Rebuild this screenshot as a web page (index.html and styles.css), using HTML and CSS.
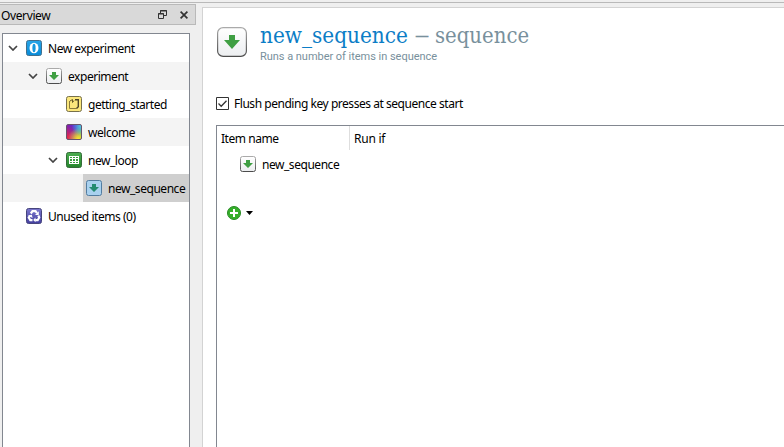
FILE: index.html
```
<!DOCTYPE html>
<html lang="en">
<head>
<meta charset="utf-8">
<title>Experiment editor</title>
<link rel="stylesheet" href="styles.css">
</head>
<body>
<svg class="defs" width="0" height="0">
  <defs>
    <linearGradient id="paper" x2="0" y2="1"><stop stop-color="#fff"/><stop offset="1" stop-color="#eceef0"/></linearGradient>
    <linearGradient id="edge" x2="0" y2="1"><stop stop-color="#aaa"/><stop offset="1" stop-color="#4c4c4c"/></linearGradient>
    <linearGradient id="blue" x2="0" y2="1"><stop stop-color="#27a5e8"/><stop offset="1" stop-color="#098bd8"/></linearGradient>
    <linearGradient id="leaf" x2="0" y2="1"><stop stop-color="#4cae50"/><stop offset="1" stop-color="#24862b"/></linearGradient>
    <linearGradient id="violet" x2="0" y2="1"><stop stop-color="#7c78cd"/><stop offset="1" stop-color="#433f9f"/></linearGradient>
    <symbol id="seq" viewBox="0 0 16 16">
      <rect x=".5" y=".5" width="15" height="15" rx="2" fill="url(#paper)" stroke="url(#edge)"/>
      <path d="M6 4h4v3h3l-5 5-5-5h3z" fill="#3f9f43"/>
    </symbol>
    <symbol id="chev" viewBox="0 0 10 6"><path d="M1 1l4 4 4-4" fill="none" stroke="#444" stroke-width="1.7"/></symbol>
  </defs>
</svg>
<div class="toolbar"></div>
<div class="workspace">
  <aside class="dock">
    <header class="dock-title"><span class="label dock-name">Overview</span>
      <svg class="float" width="9" height="9" viewBox="0 0 9 9" fill="none" stroke="#333"><path d="M2.5 3V.5h6v5H6M2 1h7"/><path d="M.5 3.500h5v5h-5zM0 4h6"/></svg>
      <svg class="close" width="8" height="8" viewBox="0 0 8 8"><path d="M.6.6l6.800 6.800M7.400.6L.6 7.400" stroke="#333" stroke-width="1.700"/></svg>
    </header>
    <div class="tree">
      <div class="row level0"><svg class="chevron"><use href="#chev"/></svg>
        <svg class="icon" viewBox="0 0 16 16"><rect x=".5" y=".5" width="15" height="15" rx="2" fill="url(#blue)" stroke="#426f8c"/><ellipse cx="8" cy="8" rx="4.500" ry="5.200" fill="#fff"/><ellipse cx="8" cy="8" rx="1.600" ry="4.200" fill="#1598df"/></svg>
        <span class="label">New experiment</span></div>
      <div class="row level1 alt"><svg class="chevron"><use href="#chev"/></svg>
        <svg class="icon"><use href="#seq"/></svg><span class="label">experiment</span></div>
      <div class="row level2"><span class="chevron"></span>
        <svg class="icon" viewBox="0 0 16 16"><rect x=".5" y=".5" width="15" height="15" rx="2" fill="#fbe77c" stroke="#77704b"/><path d="M3.500 5v7.500h7" fill="none" stroke="#8b7b3b"/><path d="M4 5l2.500-1.500v3L8 4.500" fill="none" stroke="#665a25"/><path d="M9 3.700h3.300v7l-1.800 1.800" fill="none" stroke="#4d4527" stroke-width="1.400"/></svg>
        <span class="label wide">getting_started</span></div>
      <div class="row level2 alt"><span class="chevron"></span><span class="icon rainbow"></span><span class="label">welcome</span></div>
      <div class="row level2"><svg class="chevron"><use href="#chev"/></svg>
        <svg class="icon" viewBox="0 0 16 16"><rect x=".5" y=".5" width="15" height="15" rx="2" fill="url(#leaf)" stroke="#336b38"/><path d="M3 4h10v8H3z" fill="#fff"/><path d="M4 5h2v1H4zm3 0h2v1H7zm3 0h2v1h-2zM4 7h2v2H4zm3 0h2v2H7zm3 0h2v2h-2zM4 10h2v1H4zm3 0h2v1H7zm3 0h2v1h-2z" fill="#399c3e"/></svg>
        <span class="label">new_loop</span></div>
      <div class="row level3 alt"><div class="selected">
        <svg class="icon" viewBox="0 0 16 16"><rect x=".5" y=".5" width="15" height="15" rx="2" fill="#a9d1ef" stroke="#527ca0"/><path d="M6 4h4v3h3l-5 5-5-5h3z" fill="#238b71"/></svg>
        <span class="label">new_sequence</span></div></div>
      <div class="row level0"><span class="chevron"></span>
        <svg class="icon" viewBox="0 0 16 16"><rect x=".5" y=".5" width="15" height="15" rx="2" fill="url(#violet)" stroke="#47457d"/><g fill="none" stroke="#fff" stroke-width="2.200"><path d="M4.800 5.500l1.700-2.300h3l1.500 2"/><path d="M12.300 7.500l.9 2-1.500 2.700H9.200"/><path d="M6.500 12.200H4.300L2.800 9.500 4 7.700"/></g><path d="M12.800 3.200v3.700H9zM9.500 9.500v4.700L7.200 12zM2 7.500l3.800-.8.8 3.300z" fill="#fff"/></svg>
        <span class="label">Unused items (0)</span></div>
    </div>
  </aside>
  <main class="editor">
    <header class="heading">
      <svg class="item-icon" width="30" height="30" viewBox="0 0 30 30"><rect x=".6" y=".6" width="28.800" height="28.800" rx="5.500" fill="url(#paper)" stroke="url(#edge)" stroke-width="1.200"/><path d="M12 8h6v5h5l-8 9-8-9h5z" fill="#3f9f43"/></svg>
      <div class="titles"><h1><span class="t-name">new_sequence</span><span class="t-dash">—</span><span class="t-type">sequence</span></h1><p>Runs a number of items in sequence</p></div>
    </header>
    <div class="option">
      <svg width="13" height="13" viewBox="0 0 13 13"><path d="M.5.5h12v12H.5z" fill="#fff" stroke="#333"/><path d="M2.500 6.500l2.700 2.700 5.300-5.500" fill="none" stroke="#333" stroke-width="1.300"/></svg>
      <span class="label">Flush pending key presses at sequence start</span>
    </div>
    <section class="table">
      <div class="columns"><div class="column first"><span class="label">Item name</span></div><div class="column"><span class="label wide">Run if</span></div></div>
      <div class="entry"><svg class="icon"><use href="#seq"/></svg><span class="label">new_sequence</span></div>
      <div class="add"><svg width="14" height="14" viewBox="0 0 14 14"><circle cx="7" cy="7" r="6.500" fill="#35af2a" stroke="#288a24"/><path d="M7 3v8M3 7h8" stroke="#fff" stroke-width="2"/></svg><svg width="7" height="4" viewBox="0 0 7 4"><path d="M0 0h7L3.500 4z"/></svg></div>
    </section>
  </main>
</div>
</body>
</html>
```
FILE: styles.css
```
* { box-sizing: border-box; }
body { margin: 0; width: 784px; height: 447px; overflow: hidden; background: #efefef; color: #000; font: 12px/16px "Noto Sans", sans-serif; }
svg { display: block; flex: none; }
.defs { position: absolute; }
.toolbar { height: 3px; border-bottom: 1px solid #b9b9b9; }
.workspace { display: flex; height: 444px; }
.dock { width: 202px; display: flex; flex-direction: column; padding-top: 1px; }
.dock-title { width: 196px; height: 21px; display: flex; align-items: center; padding-left: 1px; background: #d9d9d9; border: 1px solid #b9b9b9; border-left: 0; }
.dock-title .dock-name { width: 157px; padding-top: 2px; letter-spacing: -.38px; }
.float { margin-left: 0; }
.close { margin-left: 13px; }
.tree { width: 188px; flex: 1; margin: 8px 0 0 2px; background: #fff; border: 1px solid #828790; border-bottom: 0; }
.row { height: 28px; display: flex; align-items: center; }
.alt { background: #f4f4f4; }
.level0 { padding-left: 5px; }
.level1 { padding-left: 25px; }
.level2 { padding-left: 45px; }
.level3 { padding-left: 80px; }
.chevron { width: 10px; height: 6px; margin-right: 8px; flex: none; }
.icon { width: 16px; height: 16px; margin-right: 6px; flex: none; }
.selected { height: 28px; flex: 1; display: flex; align-items: center; padding-left: 3px; background: #cfcfcf; }
.rainbow { border: 1px solid #66536c; border-radius: 2px; background: radial-gradient(circle at 100% 10%, #4ac4e6, transparent 50%), radial-gradient(circle at 80% 100%, #ffe62d, transparent 60%), radial-gradient(circle at 0 90%, #ee2242, transparent 70%), linear-gradient(110deg, #7a1bb7, #5531d0 50%, #69d838); }
.label { display: block; white-space: nowrap; letter-spacing: -.46px; flex: none; }
.row .label, .entry .label, .option .label { padding-top: 2px; }
.wide { letter-spacing: -.25px; }
.row .wide { letter-spacing: -.5px; }
.editor { flex: 1; margin-top: 4px; padding: 0 0 0 13px; background: #fff; border: solid #d3d3d3; border-width: 1px 0 0 1px; display: flex; flex-direction: column; }
.heading { display: flex; height: 87px; padding: 19px 0 0 1px; }
.titles { margin-left: 13px; }
h1 { margin: -5px 0 0; height: 28px; display: flex; font: 22px/28px "Roboto Slab", "DejaVu Serif", serif; color: #0b7dc6; white-space: nowrap; }
h1 span { display: block; transform-origin: 0 50%; }
.t-name { width: 155px; transform: scaleX(.912); }
.t-dash { width: 20px; color: #78909c; transform: scaleX(.64); }
.t-type { color: #78909c; transform: scaleX(.895); }
p { margin: 0; font: 11px/14px Roboto, sans-serif; color: #78909c; white-space: nowrap; letter-spacing: -.03px; }
.option { height: 16px; display: flex; align-items: center; gap: 5px; }
.table { flex: 1; margin-top: 14px; border: solid #828790; border-width: 1px 0 0 1px; }
.columns { display: flex; height: 24px; align-items: stretch; }
.column { padding: 5px 0 0 4px; }
.first { width: 133px; border-right: 1px solid #dedede; }
.entry { height: 28px; display: flex; align-items: center; padding-left: 23px; }
.add { display: flex; align-items: center; gap: 5px; margin: 28px 0 0 10px; }
```
